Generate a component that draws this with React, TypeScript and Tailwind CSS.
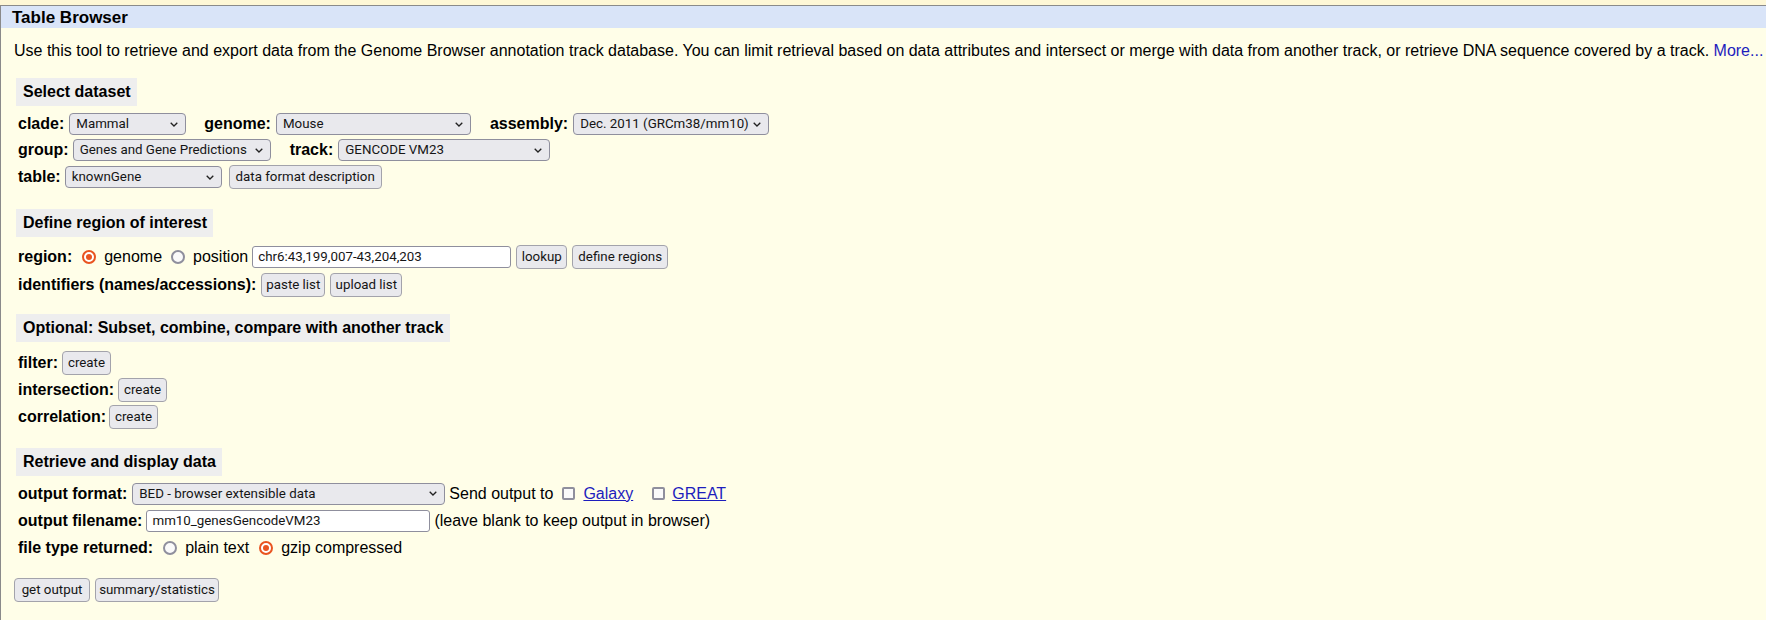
import React from 'react';

const ctl = "font-['Roboto',sans-serif] text-[13.33px] text-[#151515]";

function Chevron() {
  return (
    <svg width="8" height="5" viewBox="0 0 8 5" className="shrink-0">
      <polyline points="0.7,0.7 4,4 7.3,0.7" fill="none" stroke="#222" strokeWidth="1.3" />
    </svg>
  );
}

function Sel({ w, text, className = '' }: { w: string; text: string; className?: string }) {
  return (
    <div
      className={`inline-flex items-center justify-between h-[22px] border border-[#8f8f9d] rounded-[4px] bg-[#e9e9ed] pl-[6px] pr-[7px] ${ctl} ${w} ${className}`}
    >
      <span className="leading-none">{text}</span>
      <Chevron />
    </div>
  );
}

function Btn({ w, text, className = '' }: { w: string; text: string; className?: string }) {
  return (
    <button
      className={`inline-flex items-center justify-center h-[24px] border border-[#a3a3ab] rounded-[4px] bg-[#e9e9ed] ${ctl} ${w} ${className}`}
    >
      {text}
    </button>
  );
}

function Field({ w, value, className = '' }: { w: string; value: string; className?: string }) {
  return (
    <div
      className={`inline-flex items-center h-[22px] border border-[#8f8f9d] rounded-[3px] bg-white pl-[5px] ${ctl} ${w} ${className}`}
    >
      {value}
    </div>
  );
}

function Radio({ checked, className = '' }: { checked?: boolean; className?: string }) {
  return checked ? (
    <span className={`inline-flex items-center justify-center w-[14px] h-[14px] rounded-full border-2 border-[#e95420] bg-white ${className}`}>
      <span className="w-[6px] h-[6px] rounded-full bg-[#e95420]" />
    </span>
  ) : (
    <span className={`inline-block w-[14px] h-[14px] rounded-full border-2 border-[#8f8f9d] bg-[#fafafa] ${className}`} />
  );
}

function Check({ className = '' }: { className?: string }) {
  return <span className={`inline-block w-[13px] h-[13px] rounded-[2px] border-2 border-[#8f8f9d] bg-[#fafafa] ${className}`} />;
}

function Heading({ children }: { children: React.ReactNode }) {
  return (
    <div className="ml-[2px] inline-flex items-center h-[28px] pl-[7px] pr-[6px] bg-[#eeeeee] font-bold">{children}</div>
  );
}

export default function App() {
  return (
    <div className="w-full h-screen overflow-hidden bg-[#fef7d6] font-['Liberation_Sans',Arial,sans-serif] text-[16px] text-black">
      <div className="h-[5px]" />
      <div className="h-[615px] border-t border-l border-[#8a8a8a] bg-[#fffee8]">
        {/* Title bar */}
        <div className="h-[22px] bg-[#d9e4f8] pl-[11px] flex items-center">
          <span className="text-[17px] font-bold leading-none">Table Browser</span>
        </div>

        <div className="pl-[13px]">
          <p className="mt-[14px] leading-[18px] whitespace-nowrap">
            Use this tool to retrieve and export data from the Genome Browser annotation track database. You can limit
            retrieval based on data attributes and intersect or merge with data from another track, or retrieve DNA
            sequence covered by a track. <span className="text-[#1d1dbd]">More...</span>
          </p>

          {/* Select dataset */}
          <div className="mt-[18px]">
            <Heading>Select dataset</Heading>
            <div className="mt-[5px] ml-[4px]">
              <div className="flex items-center h-[26px] whitespace-nowrap">
                <b>clade:</b>
                <Sel w="w-[117px]" text="Mammal" className="ml-[5px]" />
                <b className="ml-[18px]">genome:</b>
                <Sel w="w-[195px]" text="Mouse" className="ml-[5px]" />
                <b className="ml-[19px]">assembly:</b>
                <Sel w="w-[196px]" text="Dec. 2011 (GRCm38/mm10)" className="ml-[5px]" />
              </div>
              <div className="flex items-center h-[26px] whitespace-nowrap">
                <b>group:</b>
                <Sel w="w-[198px]" text="Genes and Gene Predictions" className="ml-[4px]" />
                <b className="ml-[19px]">track:</b>
                <Sel w="w-[212px]" text="GENCODE VM23" className="ml-[5px]" />
              </div>
              <div className="flex items-center h-[28px] whitespace-nowrap">
                <b>table:</b>
                <Sel w="w-[157px]" text="knownGene" className="ml-[4px]" />
                <Btn w="w-[153px]" text="data format description" className="ml-[7px]" />
              </div>
            </div>
          </div>

          {/* Define region */}
          <div className="mt-[18px]">
            <Heading>Define region of interest</Heading>
            <div className="mt-[6px] ml-[4px]">
              <div className="flex items-center h-[28px] whitespace-nowrap">
                <b>region:</b>
                <Radio checked className="ml-[10px]" />
                <span className="ml-[8px]">genome</span>
                <Radio className="ml-[9px]" />
                <span className="ml-[8px]">position</span>
                <Field w="w-[259px]" value="chr6:43,199,007-43,204,203" className="ml-[4px]" />
                <Btn w="w-[51px]" text="lookup" className="ml-[5px]" />
                <Btn w="w-[96px]" text="define regions" className="ml-[5px]" />
              </div>
              <div className="flex items-center h-[28px] whitespace-nowrap">
                <b>identifiers (names/accessions):</b>
                <Btn w="w-[64px]" text="paste list" className="ml-[5px]" />
                <Btn w="w-[72px]" text="upload list" className="ml-[5px]" />
              </div>
            </div>
          </div>

          {/* Optional */}
          <div className="mt-[15px]">
            <Heading>Optional: Subset, combine, compare with another track</Heading>
            <div className="mt-[7px] ml-[4px]">
              <div className="flex items-center h-[27px]">
                <b>filter:</b>
                <Btn w="w-[49px]" text="create" className="ml-[4px]" />
              </div>
              <div className="flex items-center h-[27px]">
                <b>intersection:</b>
                <Btn w="w-[49px]" text="create" className="ml-[4px]" />
              </div>
              <div className="flex items-center h-[28px]">
                <b>correlation:</b>
                <Btn w="w-[49px]" text="create" className="ml-[3px]" />
              </div>
            </div>
          </div>

          {/* Retrieve */}
          <div className="mt-[17px]">
            <Heading>Retrieve and display data</Heading>
            <div className="mt-[4px] ml-[4px]">
              <div className="flex items-center h-[27px] whitespace-nowrap">
                <b>output format:</b>
                <Sel w="w-[313px]" text="BED - browser extensible data" className="ml-[5px]" />
                <span className="ml-[4px]">Send output to</span>
                <Check className="ml-[9px]" />
                <a className="ml-[8px] text-[#1d1dbd] underline">Galaxy</a>
                <Check className="ml-[19px]" />
                <a className="ml-[7px] text-[#1d1dbd] underline">GREAT</a>
              </div>
              <div className="flex items-center h-[27px] whitespace-nowrap">
                <b>output filename:</b>
                <Field w="w-[284px]" value="mm10_genesGencodeVM23" className="ml-[4px]" />
                <span className="ml-[4px]">(leave blank to keep output in browser)</span>
              </div>
              <div className="flex items-center h-[27px] whitespace-nowrap">
                <b>file type returned:</b>
                <Radio className="ml-[10px]" />
                <span className="ml-[8px]">plain text</span>
                <Radio checked className="ml-[10px]" />
                <span className="ml-[8px]">gzip compressed</span>
              </div>
            </div>
          </div>

          <div className="mt-[17px] flex items-center">
            <Btn w="w-[76px]" text="get output" />
            <Btn w="w-[124px]" text="summary/statistics" className="ml-[5px]" />
          </div>
        </div>
      </div>
    </div>
  );
}
